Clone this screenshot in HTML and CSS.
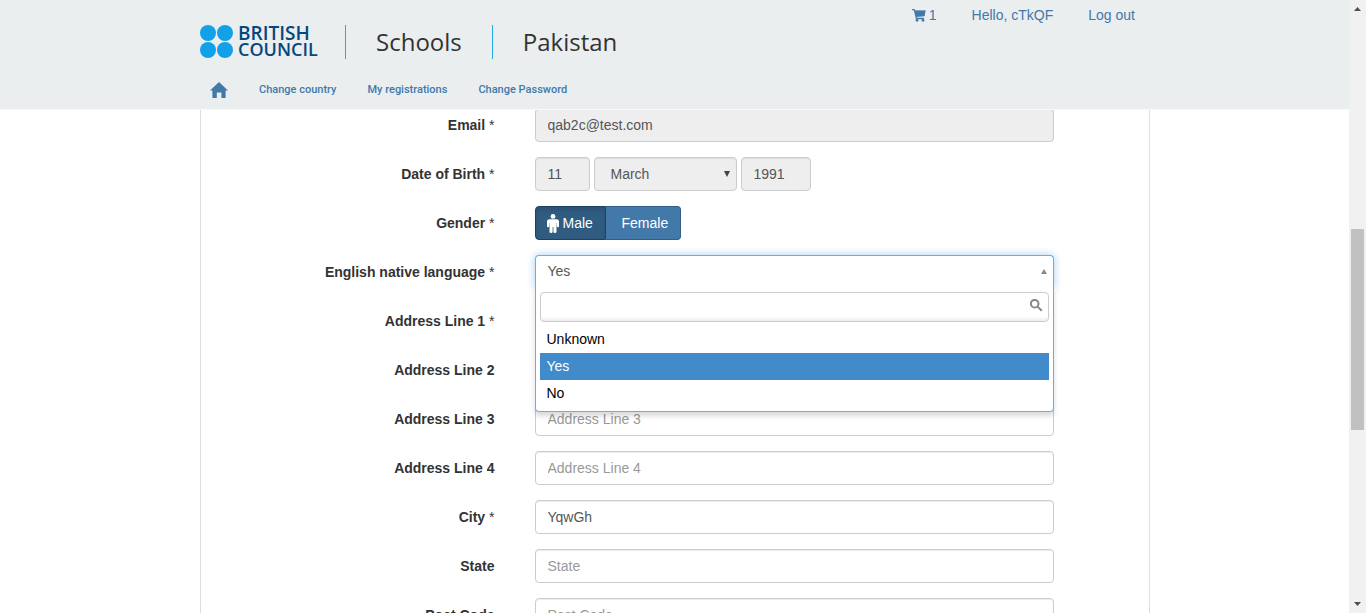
FILE: index.html
```html
<!DOCTYPE html>
<html lang="en">
<head>
<meta charset="utf-8">
<title>British Council Schools Pakistan</title>
<link rel="stylesheet" href="styles.css">
</head>
<body>
<div class="window">
  <div class="page">
    <header class="header">
      <div class="header-inner">
        <div class="brand">
          <a class="logo" href="#">
            <svg class="logo-dots" viewBox="0 0 33 33" aria-hidden="true"><circle cx="8" cy="8" r="8"/><circle cx="25" cy="8" r="8"/><circle cx="8" cy="25" r="8"/><circle cx="25" cy="25" r="8"/></svg>
            <span class="logo-text"><span class="logo-first">BRITISH</span><span>COUNCIL</span></span>
          </a>
          <span class="brand-part">Schools</span>
          <span class="brand-part">Pakistan</span>
        </div>
        <div class="account">
          <a class="cart" href="#" aria-label="Cart, 1 item"><svg viewBox="0 0 14 14" aria-hidden="true"><path d="M0 1h2.6l.5 1.6H13.6L12.4 8.2 4.8 8.8l.2 1H12v1.4H4L1.8 2.2H0z"/><path d="M3 2.8h10.4l-1 5.2-7.8.6z"/><circle cx="5" cy="12.3" r="1.4"/><circle cx="11" cy="12.3" r="1.4"/></svg>1</a>
          <a href="#">Hello, cTkQF</a>
          <a href="#">Log out</a>
        </div>
        <nav class="nav">
          <a class="home" href="#" aria-label="Home"><svg viewBox="0 0 18 16" aria-hidden="true"><path d="M9 0l9 8.6h-2.4V16h-4.2v-5.6H6.8V16H2.4V8.6H0z"/></svg></a>
          <a href="#">Change country</a>
          <a href="#">My registrations</a>
          <a href="#">Change Password</a>
        </nav>
      </div>
    </header>
    <main class="panel">
      <form class="form">
        <div class="row"><label for="email">Email <i>*</i></label><input class="field" id="email" value="qab2c@test.com" disabled></div>
        <div class="row"><label for="day">Date of Birth <i>*</i></label>
          <div class="birth">
            <input class="field day" id="day" value="11" disabled>
            <div class="month"><select class="field" aria-label="Month" disabled><option>March</option></select><svg viewBox="0 0 6 6" aria-hidden="true"><path d="M0 0h6L3 6z"/></svg></div>
            <input class="field year" aria-label="Year" value="1991" disabled>
          </div>
        </div>
        <div class="row"><label for="male">Gender <i>*</i></label>
          <div class="toggle">
            <button type="button" class="male" id="male" aria-pressed="true"><svg viewBox="0 0 12 19" aria-hidden="true"><circle cx="6" cy="2.4" r="2.4"/><path d="M2.5 5.2h7Q12 5.2 12 7.5V12Q12 13.2 11 13.2T9.8 12V9h-.3V18q0 1-1.5 1T6.4 18v-5h-.8v5q0 1-1.6 1T2.5 18V9H2.2V12q0 1.2-1.2 1.2T0 12V7.5Q0 5.2 2.5 5.2z"/></svg>Male</button><button type="button" class="female" aria-pressed="false">Female</button>
          </div>
        </div>
        <div class="row"><label for="native">English native language <i>*</i></label>
          <div class="combo">
            <button type="button" class="combo-value" id="native" aria-expanded="true"><span>Yes</span><svg viewBox="0 0 6 5" aria-hidden="true"><path d="M0 5h6L3 0z"/></svg></button>
            <div class="combo-menu">
              <div class="search"><input type="text" aria-label="Search options"><svg viewBox="0 0 13 13" aria-hidden="true"><circle cx="4.7" cy="4.7" r="3.8"/><path d="M7.6 7.6l4.2 4.2"/></svg></div>
              <ul class="options" role="listbox" aria-label="English native language">
                <li role="option" aria-selected="false">Unknown</li>
                <li role="option" aria-selected="true">Yes</li>
                <li role="option" aria-selected="false">No</li>
              </ul>
            </div>
          </div>
        </div>
        <div class="row"><label for="a1">Address Line 1 <i>*</i></label><input class="field" id="a1"></div>
        <div class="row"><label for="a2">Address Line 2</label><input class="field" id="a2"></div>
        <div class="row"><label for="a3">Address Line 3</label><input class="field" id="a3" placeholder="Address Line 3"></div>
        <div class="row"><label for="a4">Address Line 4</label><input class="field" id="a4" placeholder="Address Line 4"></div>
        <div class="row"><label for="city">City <i>*</i></label><input class="field" id="city" value="YqwGh"></div>
        <div class="row"><label for="state">State</label><input class="field" id="state" placeholder="State"></div>
        <div class="row"><label for="post">Post Code</label><input class="field" id="post" placeholder="Post Code"></div>
      </form>
    </main>
  </div>
  <div class="scrollbar" aria-hidden="true">
    <svg viewBox="0 0 7 4"><path d="M0 4h7L3.5 0z"/></svg>
    <div class="track"><div class="thumb"></div></div>
    <svg viewBox="0 0 7 4"><path d="M0 0h7L3.5 4z"/></svg>
  </div>
</div>
</body>
</html>
```
FILE: styles.css
```css
* { box-sizing: border-box; }
body {
  margin: 0;
  font: 14px/20px "Liberation Sans", Arial, sans-serif;
  color: #333;
  background: #fff;
}
a { color: #4279a9; text-decoration: none; }
svg { display: block; fill: currentColor; }
input, select, button { font: inherit; color: inherit; margin: 0; }

.window {
  display: grid;
  grid-template-columns: minmax(0, 1fr) 17px;
  height: 100vh;
  overflow: hidden;
}
.page { overflow: hidden; }

/* Header */
.header {
  position: relative;
  z-index: 2;
  background: #eaeeef;
  border-bottom: 1px solid #f8fafa;
}
.header-inner {
  display: grid;
  grid-template-columns: 1fr auto;
  max-width: 949px;
  margin: 0 auto;
  padding-bottom: 9px;
}
.brand { display: flex; padding-top: 25px; }
.logo { display: flex; width: 145px; gap: 5px; color: #06477f; }
.logo-dots { width: 33px; height: 33px; fill: #12a0e8; }
.logo-text {
  display: flex;
  flex-direction: column;
  font: 600 18px/16px "Open Sans", sans-serif;
}
.logo-first { font-size: 19px; }
.brand-part {
  height: 34px;
  padding: 0 30px;
  border-left: 1px solid #23abe2;
  font: 24px/34px "Open Sans", sans-serif;
}
.account { display: flex; gap: 35px; padding: 5px 14px 0 0; }
.cart { display: flex; gap: 3px; }
.cart svg { width: 14px; height: 14px; margin-top: 3px; }
.nav {
  grid-column: 1 / -1;
  display: flex;
  align-items: center;
  gap: 31px;
  padding: 21px 0 0 10px;
  font: 500 11px/20px Roboto, sans-serif;
}
.home { width: 18px; }
.home svg { width: 18px; height: 16px; }

/* Form */
.panel {
  max-width: 950px;
  margin: -17px auto 0;
  padding: 15px 95px 0 0;
  border: solid #ddd;
  border-width: 0 1px;
}
.row {
  display: grid;
  grid-template-columns: 294px minmax(0, 1fr);
  column-gap: 40px;
  margin-bottom: 15px;
}
.row > label { text-align: right; font-weight: bold; line-height: 34px; }
.row i { font-style: normal; font-weight: normal; }
.field {
  width: 100%;
  height: 34px;
  padding: 6px 12px;
  border: 1px solid #ccc;
  border-radius: 4px;
  background: #fff;
  color: #555;
  box-shadow: inset 0 1px 1px rgba(0, 0, 0, .075);
  appearance: none;
}
.field:disabled { background: #eee; color: #555; opacity: 1; }
.field::placeholder { color: #999; opacity: 1; }
.birth { display: flex; gap: 4px; }
.birth .day { width: 55px; }
.birth .year { width: 70px; }
.month { position: relative; width: 143px; }
.month select { padding-left: 16px; }
.month svg { position: absolute; right: 7px; top: 14px; width: 6px; height: 6px; color: #444; }

.toggle { display: flex; }
.toggle button {
  display: flex;
  align-items: center;
  height: 34px;
  border: 1px solid #305e86;
  background: #4279a9;
  color: #fff;
}
.toggle .male {
  width: 71px;
  gap: 4px;
  padding: 0 11px;
  border-color: #20415e;
  border-radius: 4px 0 0 4px;
  background: #315c82;
  box-shadow: inset 0 3px 5px rgba(0, 0, 0, .125);
}
.toggle .male svg { flex: none; width: 12px; height: 19px; }
.toggle .female {
  width: 75px;
  padding: 0 0 0 16px;
  border-left: 0;
  border-radius: 0 4px 4px 0;
}

.combo { position: relative; z-index: 1; }
.combo-value {
  display: flex;
  justify-content: space-between;
  align-items: center;
  width: 100%;
  height: 34px;
  padding: 0 6px 3px 12px;
  border: 1px solid #66afe9;
  border-bottom: 0;
  border-radius: 4px 4px 0 0;
  background: #fff;
  color: #555;
  box-shadow: 0 0 8px rgba(102, 175, 233, .6);
}
.combo-value svg { width: 6px; height: 5px; color: #888; }
.combo-menu {
  position: absolute;
  inset: 33px 0 auto;
  padding: 4px;
  border: 1px solid #66afe9;
  border-top: 0;
  border-radius: 0 0 4px 4px;
  background: #fff;
  box-shadow: 0 4px 5px rgba(0, 0, 0, .15);
  color: #000;
}
.search { position: relative; }
.search input {
  display: block;
  width: 100%;
  height: 30px;
  padding: 4px 20px 4px 5px;
  border: 1px solid #ccc;
  border-radius: 4px;
  background: linear-gradient(#fff 85%, #eee 99%);
}
.search svg {
  position: absolute;
  right: 6px;
  top: 7px;
  width: 13px;
  height: 13px;
  fill: none;
  stroke: #888;
  stroke-width: 2;
}
.options { margin: 4px 0 0; padding: 0; list-style: none; }
.options li { padding: 3px 7px 4px; }
.options [aria-selected="true"] { background: #428bca; color: #fff; }

/* Scrollbar */
.scrollbar {
  display: flex;
  flex-direction: column;
  align-items: center;
  padding: 7px 0;
  background: #f1f1f1;
  color: #505050;
}
.scrollbar svg { width: 7px; height: 4px; }
.track {
  flex: 1;
  display: grid;
  grid-template-rows: 218fr 201fr 172fr;
}
.thumb { grid-row: 2; width: 13px; background: #c1c1c1; }
```
